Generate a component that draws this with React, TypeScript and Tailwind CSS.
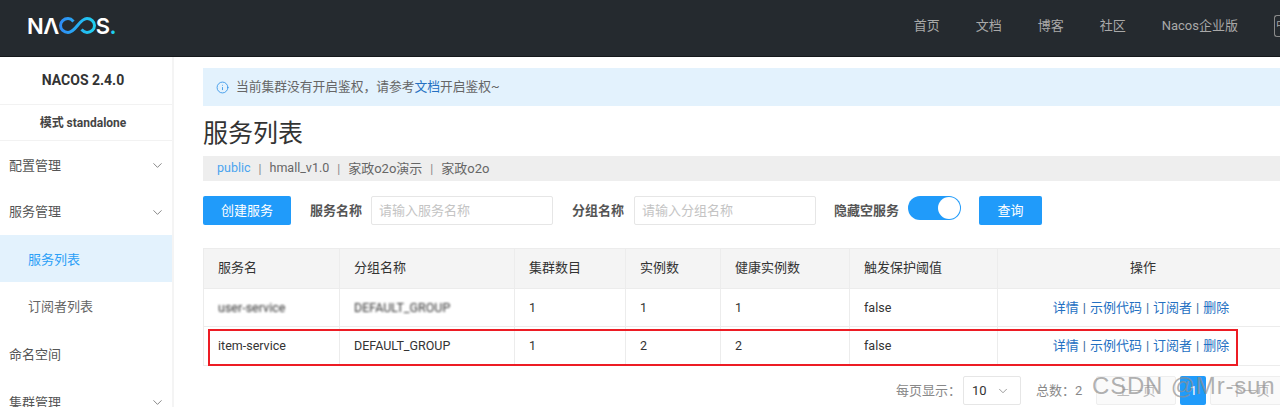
import { ChevronDown, Info } from "lucide-react";

const FONT = "font-['Roboto','Noto_Sans_CJK_SC',sans-serif]";

const COLS = [
  { title: "服务名", w: "w-[136px]" },
  { title: "分组名称", w: "w-[175px]" },
  { title: "集群数目", w: "w-[111px]" },
  { title: "实例数", w: "w-[95px]" },
  { title: "健康实例数", w: "w-[129px]" },
  { title: "触发保护阈值", w: "w-[148px]" },
];

const Actions = () => (
  <div className="text-center pr-[4px] text-[#33689c]">
    <a className="text-[#2470c2]">详情</a>
    <span className="mx-[4px]">|</span>
    <a className="text-[#2470c2]">示例代码</a>
    <span className="mx-[4px]">|</span>
    <a className="text-[#2470c2]">订阅者</a>
    <span className="mx-[4px]">|</span>
    <a className="text-[#2470c2]">删除</a>
  </div>
);

const Logo = () => (
  <div className="flex items-center text-white text-[22px] tracking-[-0.5px] font-semibold leading-none font-['Inter',sans-serif]">
    <span>NΛ</span>
    <svg width="37" height="17" viewBox="0 0 37 17" fill="none">
      <defs>
        <linearGradient id="nacos-loop" x1="0" x2="1" y1="0" y2="0">
          <stop offset="0" stopColor="#2f8cf5" />
          <stop offset="1" stopColor="#1fd0f0" />
        </linearGradient>
      </defs>
      <path
        d="M14.500 4.400C13 2.700 11.200 1.500 9 1.500 4.900 1.500 1.500 4.600 1.500 8.500s3.400 7 7.500 7c3.800 0 6.400-3.100 9.500-7s5.700-7 9.500-7c4.100 0 7.500 3.100 7.500 7s-3.400 7-7.500 7c-2.200 0-4-1.200-5.500-2.900"
        stroke="url(#nacos-loop)"
        strokeWidth="3"
      />
    </svg>
    <span>S</span>
    <span className="text-[#1fd0f0]">.</span>
  </div>
);

const MenuItem = ({ label, open, h }: { label: string; open?: boolean; h: string }) => (
  <div className={`${h} flex items-center justify-between pl-[9px] pr-[7px] text-[#555] text-[13px]`}>
    <span>{label}</span>
    {open && <ChevronDown size={15} strokeWidth={1.25} className="text-[#666]" />}
  </div>
);

const Cell = ({ children }: { children: React.ReactNode }) => (
  <td className="border border-[#ececec] pl-[14px] text-[12.500px]">{children}</td>
);

export default function App() {
  return (
    <div className={`${FONT} h-[407px] w-[1280px] overflow-hidden bg-white flex flex-col`}>
      {/* header */}
      <header className="h-[57px] shrink-0 bg-[#252a2f] border-b border-[#15181b] flex items-center pl-[27px] pb-[5px] overflow-hidden">
        <Logo />
        <nav className="ml-auto -mr-[8px] flex items-center text-[13px] text-[#a9a9a9]">
          <span className="w-[62px] text-center">首页</span>
          <span className="w-[62px] text-center">文档</span>
          <span className="w-[62px] text-center">博客</span>
          <span className="w-[62px] text-center">社区</span>
          <span className="ml-[18px]">Nacos企业版</span>
          <span className="ml-[36px] w-[14px] h-[22px] border border-r-0 border-[#8a8a8a] rounded-l-[3px] flex items-center pl-[1px] text-[11px] leading-none overflow-hidden">
            中
          </span>
        </nav>
      </header>

      <div className="flex flex-1 min-h-0">
        {/* sidebar */}
        <aside className="w-[174px] shrink-0 border-r-2 border-[#f4f4f4] overflow-hidden">
          <div className="h-[48px] flex items-center justify-center pr-[6px] font-bold text-[14px] text-[#333] border-b border-[#f2f2f2]">
            NACOS 2.4.0
          </div>
          <div className="h-[36px] flex items-center justify-center pr-[6px] font-bold text-[12px] text-[#444] border-b border-[#f2f2f2]">
            模式 standalone
          </div>
          <div className="pt-[1px]">
            <MenuItem label="配置管理" open h="h-[47px]" />
            <MenuItem label="服务管理" open h="h-[46px]" />
            <div className="h-[47px] bg-[#e3f2fd] text-[#2ba0f7] flex items-center pl-[28px] pt-[2px] text-[13px]">服务列表</div>
            <div className="h-[49px] text-[#666] flex items-center pl-[28px] text-[13px]">订阅者列表</div>
            <MenuItem label="命名空间" h="h-[48px]" />
            <MenuItem label="集群管理" open h="h-[47px]" />
          </div>
        </aside>

        {/* main */}
        <main className="flex-1 min-w-0 pl-[29px] pt-[11px] overflow-hidden relative">
          <div className="h-[38px] bg-[#e3f2fd] flex items-center pl-[13px] text-[12.750px] text-[#666]">
            <Info size={13} strokeWidth={1.5} className="text-[#2a8fe8] mr-[7px]" />
            <span>
              当前集群没有开启鉴权，请参考<a className="text-[#2470c2]">文档</a>开启鉴权~
            </span>
          </div>

          <h1 className="text-[25px] leading-[36px] mt-[10px] text-[#333]">服务列表</h1>

          <div className="h-[25px] mt-[4px] bg-[#eeeeee] flex items-center pl-[14px] text-[13px] text-[#666]">
            <span className="text-[#4aa4ee] text-[12.500px]">public</span>
            <span className="mx-[8px] text-[#888] text-[12px]">|</span>
            <span className="text-[12.500px]">hmall_v1.0</span>
            <span className="mx-[8px] text-[#888] text-[12px]">|</span>
            <span>家政o2o演示</span>
            <span className="mx-[8px] text-[#888] text-[12px]">|</span>
            <span>家政o2o</span>
          </div>

          {/* filters */}
          <div className="mt-[15px] flex items-center h-[29px] text-[13px]">
            <button className="w-[88px] h-[29px] bg-[#209bfa] text-white rounded-[2px]">创建服务</button>
            <span className="ml-[19px] font-bold text-[#555]">服务名称</span>
            <div className="ml-[9px] w-[182px] h-[29px] border border-[#e6e6e6] rounded-[2px] flex items-center pl-[7px] text-[#c4c4c4]">
              请输入服务名称
            </div>
            <span className="ml-[19px] font-bold text-[#555]">分组名称</span>
            <div className="ml-[10px] w-[182px] h-[29px] border border-[#e6e6e6] rounded-[2px] flex items-center pl-[7px] text-[#c4c4c4]">
              请输入分组名称
            </div>
            <span className="ml-[18px] font-bold text-[#555]">隐藏空服务</span>
            <div className="ml-[9px] w-[53px] h-[24px] self-start rounded-full bg-[#209bfa] flex items-center justify-end pr-[1px]">
              <div className="w-[22px] h-[22px] rounded-full bg-white" />
            </div>
            <button className="ml-[18px] w-[63px] h-[29px] bg-[#209bfa] text-white rounded-[2px]">查询</button>
          </div>

          {/* table */}
          <table className="mt-[23px] w-[1086px] table-fixed border-collapse text-[13px] text-[#333]">
            <thead>
              <tr className="h-[40px] bg-[#f4f4f4]">
                {COLS.map((c) => (
                  <th key={c.title} className={`${c.w} border border-[#ececec] pl-[14px] pb-[2px] text-left font-normal`}>
                    {c.title}
                  </th>
                ))}
                <th className="border border-[#ececec] pb-[2px] font-normal">操作</th>
              </tr>
            </thead>
            <tbody>
              <tr className="h-[38px] [&>td]:pt-[1px]">
                <Cell>
                  <span className="blur-[1.2px]">user-service</span>
                </Cell>
                <Cell>
                  <span className="blur-[1.2px]">DEFAULT_GROUP</span>
                </Cell>
                <Cell>1</Cell>
                <Cell>1</Cell>
                <Cell>1</Cell>
                <Cell>false</Cell>
                <td className="border border-[#ececec]">
                  <Actions />
                </td>
              </tr>
              <tr className="h-[39px]">
                <Cell>item-service</Cell>
                <Cell>DEFAULT_GROUP</Cell>
                <Cell>1</Cell>
                <Cell>2</Cell>
                <Cell>2</Cell>
                <Cell>false</Cell>
                <td className="border border-[#ececec]">
                  <Actions />
                </td>
              </tr>
            </tbody>
          </table>

          {/* pagination */}
          <div className="mt-[10px] flex items-center h-[29px] text-[13px] text-[#888] whitespace-nowrap">
            <span className="ml-[693px]">每页显示：</span>
            <div className="ml-[2px] w-[58px] h-[29px] shrink-0 border border-[#e6e6e6] rounded-[2px] flex items-center justify-between pl-[8px] pr-[10px] text-[#333]">
              10
              <ChevronDown size={14} strokeWidth={1.25} className="text-[#777]" />
            </div>
            <span className="ml-[15px]">总数：2</span>
            <div className="ml-[14px] w-[80px] h-[29px] border border-[#eeeeee] rounded-[2px] bg-[#fafafa] flex items-center justify-center text-[#bbb] shrink-0">
              上一页
            </div>
            <div className="ml-[4px] w-[26px] h-[29px] bg-[#209bfa] rounded-[2px] text-white flex items-center justify-center shrink-0">
              1
            </div>
            <div className="ml-[4px] w-[80px] h-[29px] border border-[#eeeeee] rounded-[2px] bg-[#fafafa] flex items-center justify-center text-[#bbb] shrink-0">
              下一页
            </div>
          </div>

          {/* screenshot annotation box */}
          <div className="absolute left-[34px] top-[272px] w-[1030px] h-[37px] border-2 border-[#ed1c24] pointer-events-none" />
          {/* watermark */}
          <div className="absolute left-[918px] top-[317px] text-[24px] tracking-[0.8px] leading-none text-[#8f8f8f]/70 whitespace-nowrap font-['Liberation_Sans',sans-serif]">
            CSDN @Mr-sun
          </div>
        </main>
      </div>
    </div>
  );
}
